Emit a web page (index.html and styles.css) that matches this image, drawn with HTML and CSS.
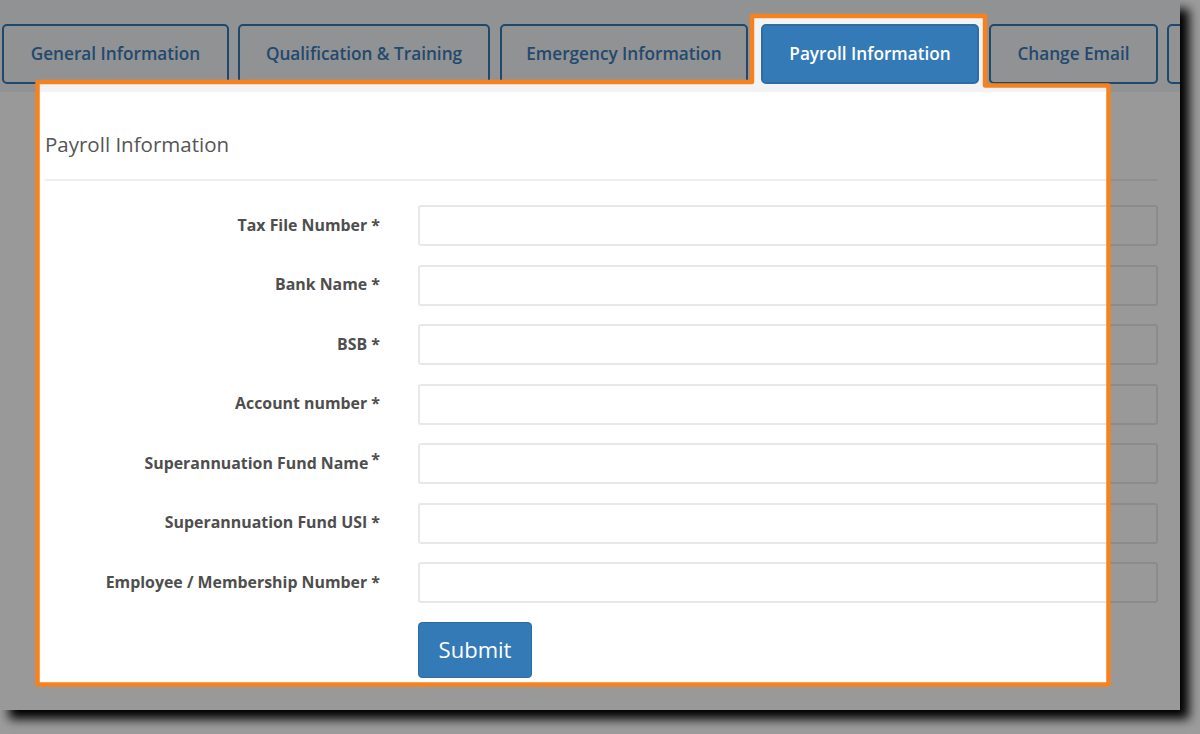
FILE: index.html
```html
<!DOCTYPE html>
<html lang="en">
<head>
<meta charset="utf-8">
<title>Payroll Information</title>
<link rel="stylesheet" href="styles.css">
</head>
<body>
<div class="frame">
  <nav class="tabs">
    <a class="tab tab-general">General Information</a>
    <a class="tab tab-qual">Qualification &amp; Training</a>
    <a class="tab tab-emerg">Emergency Information</a>
    <a class="tab tab-active">Payroll Information</a>
    <a class="tab tab-email">Change Email</a>
    <a class="tab tab-more"></a>
  </nav>
  <section class="panel">
    <h2 class="panel-title">Payroll Information</h2>
    <div class="divider"></div>
    <form class="form">
      <label class="label">Tax File Number *</label>
      <input class="input" type="text">
      <label class="label">Bank Name *</label>
      <input class="input" type="text">
      <label class="label">BSB *</label>
      <input class="input" type="text">
      <label class="label">Account number *</label>
      <input class="input" type="text">
      <label class="label">Superannuation Fund Name<span class="star">*</span></label>
      <input class="input" type="text">
      <label class="label">Superannuation Fund USI *</label>
      <input class="input" type="text">
      <label class="label">Employee / Membership Number *</label>
      <input class="input" type="text">
      <span class="spacer"></span>
      <div class="actions"><button class="btn" type="button">Submit</button></div>
    </form>
  </section>
  <svg class="highlight" width="1180" height="710" viewBox="0 0 1180 710">
    <path class="dim" fill-rule="evenodd" d="M0,0 H1180 V710 H0 Z M37.5,82 H752 V16 H985 V85.5 H1108.5 V684.5 H37.5 Z"/>
    <path class="outline" d="M37.5,82 H752 V16 H985 V85.5 H1108.5 V684.5 H37.5 Z"/>
  </svg>
</div>
</body>
</html>
```
FILE: styles.css
```css
html, body {
  margin: 0;
  padding: 0;
}
body {
  background: #9c9c9c;
  width: 1200px;
  height: 734px;
  overflow: hidden;
  font-family: "Open Sans", "Noto Sans", "Liberation Sans", sans-serif;
}
.frame {
  position: relative;
  width: 1180px;
  height: 710px;
  overflow: hidden;
  background: #f2f3f5;
  box-shadow: 9px 9px 10px #000;
}
.tabs {
  display: flex;
  gap: 10px;
  padding: 24px 0 0 2px;
  height: 60px;
}
.tab {
  flex-shrink: 0;
  box-sizing: border-box;
  height: 60px;
  display: flex;
  align-items: center;
  justify-content: center;
  padding-bottom: 2px;
  border: 2px solid #3579b6;
  border-radius: 5px;
  color: #3a7ab7;
  font-size: 17.2px;
  font-weight: 600;
  white-space: nowrap;
}
.tab-general { width: 227px; }
.tab-qual { width: 252px; margin-left: -1px; }
.tab-emerg { width: 248px; }
.tab-active {
  width: 218px;
  margin-left: 3px;
  background: #337ab7;
  border-color: #2e6da4;
  color: #fff;
}
.tab-email { width: 169px; }
.tab-more { width: 160px; margin-left: -1px; }
.panel {
  margin-top: 8px;
  background: #fff;
  height: 618px;
  padding-left: 45px;
}
.panel-title {
  margin: 0;
  padding-top: 38px;
  font-size: 20.5px;
  line-height: 28px;
  font-weight: 400;
  color: #555;
}
.divider {
  margin-top: 21px;
  width: 1113px;
  border-top: 2px solid #eeeeee;
}
.form {
  display: grid;
  grid-template-columns: 335px 740px;
  column-gap: 38px;
  row-gap: 18.5px;
  margin-top: 24px;
}
.label {
  display: flex;
  align-items: center;
  justify-content: flex-end;
  padding-bottom: 2px;
  font-size: 15.9px;
  font-weight: 700;
  color: #4e4e4e;
  white-space: nowrap;
}
.star {
  align-self: flex-start;
  margin-top: 5px;
  margin-left: 3px;
}
.input {
  box-sizing: border-box;
  height: 41px;
  margin: 0;
  border: 2px solid #e8e8e8;
  border-radius: 3px;
  background: #fff;
}
.actions {
  display: flex;
}
.btn {
  box-sizing: border-box;
  width: 114px;
  height: 56px;
  padding: 0 0 1px;
  border: 1px solid #2e6da4;
  border-radius: 4px;
  background: #337ab7;
  color: #fff;
  font-family: "Open Sans", "Noto Sans", sans-serif;
  font-size: 22px;
  font-weight: 400;
}
.highlight {
  position: absolute;
  left: 0;
  top: 0;
  pointer-events: none;
}
.dim {
  fill: rgba(0, 0, 0, 0.4);
}
.outline {
  fill: none;
  stroke: #f5821f;
  stroke-width: 4.5;
  stroke-linejoin: round;
}
```
